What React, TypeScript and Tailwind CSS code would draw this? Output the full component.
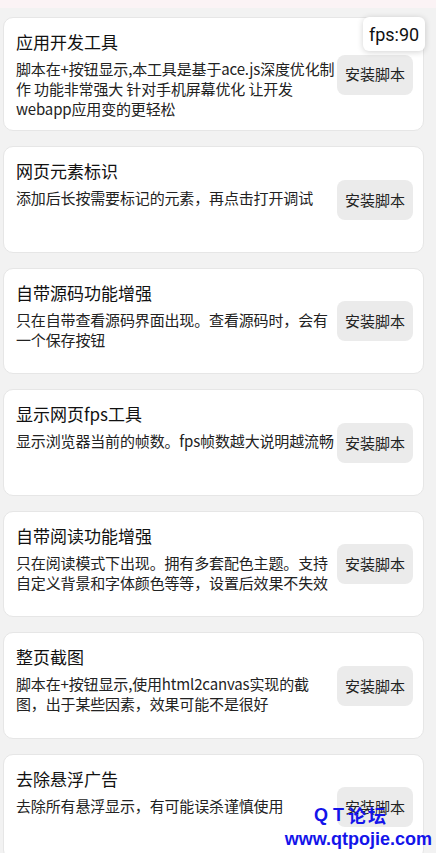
import React from "react";

const scripts = [
  {
    title: "应用开发工具",
    desc: "脚本在+按钮显示,本工具是基于ace.js深度优化制作 功能非常强大 针对手机屏幕优化 让开发webapp应用变的更轻松",
  },
  { title: "网页元素标识", desc: "添加后长按需要标记的元素，再点击打开调试" },
  { title: "自带源码功能增强", desc: "只在自带查看源码界面出现。查看源码时，会有一个保存按钮" },
  { title: "显示网页fps工具", desc: "显示浏览器当前的帧数。fps帧数越大说明越流畅" },
  {
    title: "自带阅读功能增强",
    desc: "只在阅读模式下出现。拥有多套配色主题。支持自定义背景和字体颜色等等，设置后效果不失效",
  },
  { title: "整页截图", desc: "脚本在+按钮显示,使用html2canvas实现的截图，出于某些因素，效果可能不是很好" },
  { title: "去除悬浮广告", desc: "去除所有悬浮显示，有可能误杀谨慎使用" },
];

function ScriptCard({ title, desc }: { title: string; desc: string }) {
  return (
    <div className="flex min-h-[106.5px] items-center rounded-[10px] border border-[#e6e6e6] bg-white pb-[11px] pl-[12px] pr-[10px] pt-[12px]">
      <div className="min-w-0 flex-1 self-start">
        <div className="text-[17px] leading-[24px] text-[#111]">{title}</div>
        <p className="mt-[5px] w-[322px] text-[15px] leading-[20px] tracking-[-0.15px] text-[#222]">{desc}</p>
      </div>
      <button className="h-[40px] w-[76px] shrink-0 rounded-[8px] bg-[#ebebeb] text-[15px] text-[#222]">
        安装脚本
      </button>
    </div>
  );
}

export default function App() {
  return (
    <div
      className="relative min-h-[853px] overflow-hidden bg-[#f2f2f2]"
      style={{ fontFamily: '"Noto Sans CJK SC", "Noto Sans", sans-serif' }}
    >
      <div className="h-[8px] bg-[#fbf3f5]" />
      <div className="flex flex-col gap-[15px] pb-4 pl-[3px] pr-[12px] pt-[9px]">
        {scripts.map((s) => (
          <ScriptCard key={s.title} title={s.title} desc={s.desc} />
        ))}
      </div>

      <div
        className="absolute right-[11px] top-[17px] flex h-[34px] w-[62px] items-center justify-center rounded-[6px] bg-white text-[18px] text-[#111] shadow-[0_1px_6px_rgba(0,0,0,0.18)]"
        style={{ fontFamily: "Roboto, sans-serif" }}
      >
        fps:90
      </div>

      <div className="absolute right-[4px] top-[802px] flex flex-col items-end font-bold text-[#1414ea]">
        <div className="mr-[44px] flex items-center gap-[4px] whitespace-nowrap text-[18px] leading-[26px]">
          <span style={{ fontFamily: '"Liberation Sans", Arial, sans-serif' }}>Q T</span>
          <span className="tracking-[2px]">论坛</span>
        </div>
        <div
          className="whitespace-nowrap text-[18px] leading-[22px]"
          style={{ fontFamily: '"Liberation Sans", Arial, sans-serif' }}
        >
          www.qtpojie.com
        </div>
      </div>
    </div>
  );
}
